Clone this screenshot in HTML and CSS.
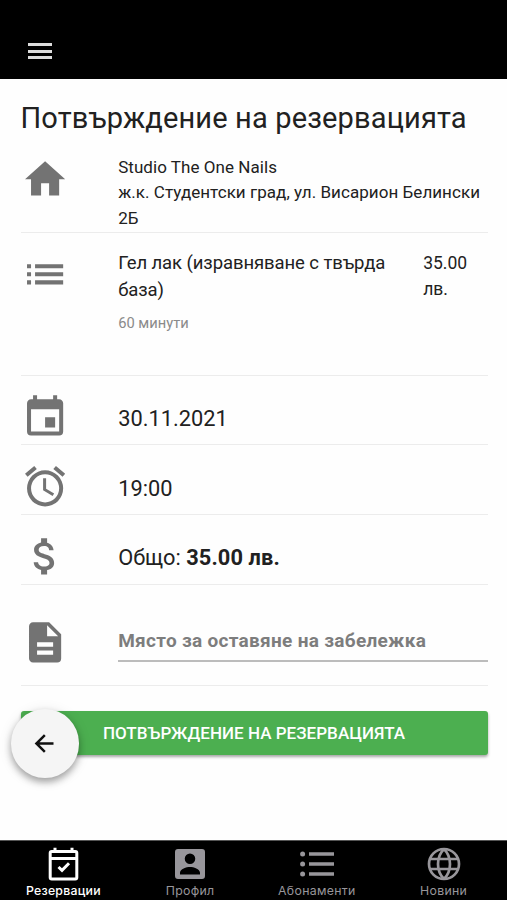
FILE: index.html
```html
<!DOCTYPE html>
<html lang="bg">
<head>
<meta charset="utf-8">
<meta name="viewport" content="width=device-width, initial-scale=1">
<title>Потвърждение на резервацията</title>
<link rel="stylesheet" href="styles.css">
</head>
<body>
<div class="app">
  <header class="topbar">
    <button class="menu" aria-label="Меню"><span></span><span></span><span></span></button>
  </header>
  <main class="content">
    <h1 class="title">Потвърждение на резервацията</h1>
    <section class="row row-place">
      <svg class="icon" viewBox="0 0 24 24"><path d="M10 20V14H14V20H19V12H22L12 3L2 12H5V20Z"/></svg>
      <div class="place"><p class="name">Studio The One Nails</p><p class="address">ж.к. Студентски град, ул. Висарион Белински 2Б</p></div>
    </section>
    <section class="row row-service">
      <svg class="icon" viewBox="0 0 24 24"><path d="M3 7h2v2H3zM7 7h14v2H7zM3 11h2v2H3zM7 11h14v2H7zM3 15h2v2H3zM7 15h14v2H7z"/></svg>
      <div class="service"><p class="service-name">Гел лак (изравняване с твърда база)</p><p class="duration">60 минути</p></div>
      <p class="price">35.00 лв.</p>
    </section>
    <section class="row row-date">
      <svg class="icon" viewBox="0 0 24 24"><path d="M19 19H5V8H19M16 1V3H8V1H6V3H5C3.89 3 3 3.89 3 5V19A2 2 0 0 0 5 21H19A2 2 0 0 0 21 19V5C21 3.89 20.1 3 19 3H18V1M17 12H12V17H17Z"/></svg>
      <p class="value date">30.11.2021</p>
    </section>
    <section class="row row-time">
      <svg class="icon" viewBox="0 0 24 24"><path d="M12 20A7 7 0 0 1 5 13A7 7 0 0 1 12 6A7 7 0 0 1 19 13A7 7 0 0 1 12 20M12 4A9 9 0 0 0 3 13A9 9 0 0 0 12 22A9 9 0 0 0 21 13A9 9 0 0 0 12 4M12.5 8H11V14L15.75 16.85L16.5 15.62L12.5 13.25V8M7.88 3.39L6.6 1.86L2 5.71L3.29 7.24L7.88 3.39M22 5.72L17.4 1.86L16.11 3.39L20.71 7.25L22 5.72Z"/></svg>
      <p class="value time">19:00</p>
    </section>
    <section class="row row-total">
      <svg class="icon" viewBox="0 0 24 24"><path d="M11.8 10.9C9.53 10.31 8.8 9.7 8.8 8.75C8.8 7.66 9.81 6.9 11.5 6.9C13.28 6.9 13.94 7.75 14 9H16.21C16.14 7.28 15.09 5.7 13 5.19V3H10V5.16C8.06 5.58 6.5 6.84 6.5 8.77C6.5 11.08 8.41 12.23 11.2 12.9C13.7 13.5 14.2 14.38 14.2 15.31C14.2 16 13.71 17.1 11.5 17.1C9.44 17.1 8.63 16.18 8.5 15H6.32C6.44 17.19 8.08 18.42 10 18.83V21H13V18.85C14.95 18.5 16.5 17.35 16.5 15.3C16.5 12.46 14.07 11.5 11.8 10.9Z"/></svg>
      <p class="value total">Общо: <b>35.00 лв.</b></p>
    </section>
    <section class="row row-note">
      <svg class="icon" viewBox="0 0 24 24"><path d="M13 9H18.5L13 3.5V9M6 2H14L20 8V20A2 2 0 0 1 18 22H6C4.89 22 4 21.1 4 20V4C4 2.89 4.89 2 6 2M16 18.2V16H8V18.2H16M16 14.2V12H8V14.2H16Z"/></svg>
      <p class="note">Място за оставяне на забележка</p>
    </section>
    <div class="actions">
      <button class="confirm"><span>ПОТВЪРЖДЕНИЕ НА РЕЗЕРВАЦИЯТА</span></button>
      <button class="back" aria-label="Назад"><svg viewBox="0 0 24 24"><path d="M20 12H5.500M12.300 4.500L4.800 12L12.300 19.500"/></svg></button>
    </div>
  </main>
  <nav class="tabs">
    <a class="tab active">
      <svg viewBox="0 0 34 34"><rect class="line" x="4.200" y="4.500" width="26.600" height="27.500" rx="1.500"/><path class="line" d="M4 11.500H31M9 0.800V5M26 0.800V5M12.500 20L16 23.300L23 16.300"/></svg>
      <span>Резервации</span>
    </a>
    <a class="tab">
      <svg viewBox="0 0 34 34"><path fill-rule="evenodd" d="M5 2H29A3 3 0 0 1 32 5V29A3 3 0 0 1 29 32H5A3 3 0 0 1 2 29V5A3 3 0 0 1 5 2ZM17 6.500A5.200 5.200 0 0 0 17 17A5.200 5.200 0 0 0 17 6.500ZM7 27.500H27V25.800C27 22 20.500 20 17 20S7 22 7 25.800Z"/></svg>
      <span>Профил</span>
    </a>
    <a class="tab">
      <svg viewBox="0 0 34 34"><circle cx="2.600" cy="7" r="2.500"/><circle cx="2.600" cy="17" r="2.500"/><circle cx="2.600" cy="27" r="2.500"/><path d="M9 5.200H34V8.700H9ZM9 15.200H34V18.700H9ZM9 25.200H34V28.700H9Z"/></svg>
      <span>Абонаменти</span>
    </a>
    <a class="tab">
      <svg viewBox="0 0 34 34"><g class="globe"><circle cx="17" cy="17" r="15"/><path d="M17 2C9 10 9 24 17 32M17 2C25 10 25 24 17 32M2.500 12H31.500M2.500 22H31.500"/></g></svg>
      <span>Новини</span>
    </a>
  </nav>
</div>
</body>
</html>
```

FILE: styles.css
```css
* { box-sizing: border-box; }
body { margin: 0; background: #fefefe; color: #212121; font-family: Roboto, "Liberation Sans", sans-serif; }
h1, p { margin: 0; font-weight: 400; }
button { border: 0; padding: 0; font-family: inherit; }
.app { height: 900px; display: flex; flex-direction: column; overflow: hidden; }
.topbar { height: 79px; flex: none; background: #000; padding: 43px 0 0 28.400px; }
.menu { display: flex; flex-direction: column; gap: 3.500px; background: none; }
.menu span { width: 23.500px; height: 3px; background: #ddd; }
.content { flex: 1; padding: 0 19.500px 0 20.500px; }
.title { height: 75.500px; padding-top: 20px; font-size: 29px; line-height: 38px; letter-spacing: .15px; white-space: nowrap; }
.row { display: grid; grid-template-columns: 48.700px minmax(0, 1fr); column-gap: 49px; border-bottom: 1px solid #ececec; }
.icon { width: 48.200px; height: 48.700px; fill: #737373; }
.row-place { height: 78.500px; }
.name, .address { font-size: 17px; line-height: 25.700px; letter-spacing: .05px; }
.address { line-height: 25.800px; }
.row-service { height: 143px; grid-template-columns: 48.700px 280px minmax(0, 1fr); padding-top: 17px; }
.price { margin-left: -24px; width: 50px; font-size: 17.500px; line-height: 26px; }
.service-name { font-size: 18.500px; line-height: 27px; letter-spacing: -.09px; }
.duration { margin-top: 8.500px; font-size: 14.700px; line-height: 20px; color: #8a8a8a; }
.row-date { height: 69px; padding-top: 17px; }
.row-time, .row-total { height: 70px; padding-top: 17px; }
.value { font-size: 21.800px; line-height: 30px; }
.date { padding-top: 11px; }
.time { padding-top: 11.500px; }
.total { padding-top: 11px; }
.total b { letter-spacing: .1px; }
.row-note { height: 101px; padding-top: 33px; }
.note { height: 44px; padding-top: 8px; border-bottom: 2px solid #bcbcbc; color: #7d7d7d; font-size: 19px; line-height: 30px; font-weight: 700; letter-spacing: .3px; }
.actions { position: relative; padding-top: 25px; }
.confirm { display: block; width: 100%; height: 44px; padding-bottom: 1px; border-radius: 3px; background: #4caf50; color: #fff; font-size: 17px; font-weight: 500; letter-spacing: .03px; box-shadow: 0 2px 3px rgba(0,0,0,.35); }
.back { position: absolute; left: -10px; top: 23px; width: 68.500px; height: 68.500px; border-radius: 50%; background: #f5f5f5; box-shadow: 0 4px 7px rgba(0,0,0,.32), 0 2px 14px rgba(0,0,0,.1); display: grid; place-items: center; }
.back svg { width: 27px; height: 27px; fill: none; stroke: #111; stroke-width: 2.200; }
.tabs { height: 60px; flex: none; display: grid; grid-template-columns: repeat(4, 1fr); background: #000; border-top: 1px solid #555; }
.tab { display: flex; flex-direction: column; align-items: center; padding-top: 5.500px; color: #98969b; fill: currentColor; font-family: Inter, sans-serif; font-size: 12.300px; line-height: 16px; }
.tab svg { width: 34px; height: 34px; margin-bottom: 2.500px; }
.tab span { letter-spacing: .32px; }
.active { color: #fff; font-weight: 500; }
.active span { letter-spacing: .25px; }
.line { fill: none; stroke: currentColor; stroke-width: 3; }
.globe { fill: none; stroke: currentColor; stroke-width: 2.700; }
```
